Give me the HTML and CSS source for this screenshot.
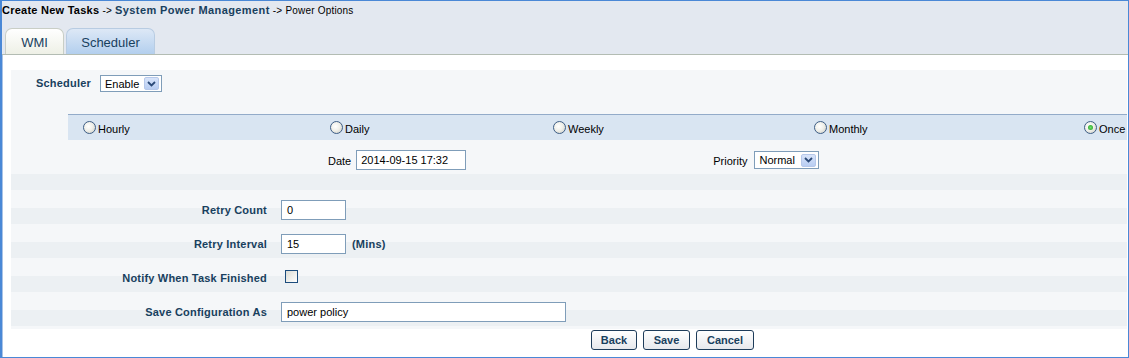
FILE: index.html
```html
<!DOCTYPE html>
<html>
<head>
<meta charset="utf-8">
<link rel="stylesheet" href="styles.css">
</head>
<body>
<div class="frame">
  <div class="header">
    <div class="crumbs"><b class="c1">Create New Tasks</b> <span class="arr">-&gt;</span> <b class="c2">System Power Management</b> <span class="arr">-&gt; Power Options</span></div>
    <div class="tabs">
      <div class="tab tab-wmi">WMI</div>
      <div class="tab tab-sched">Scheduler</div>
    </div>
  </div>
  <div class="content">
    <div class="panel">
      <div class="sched-row">
        <span class="lbl">Scheduler</span>
        <span class="sel sel-enable"><span class="sel-text">Enable</span><span class="sel-btn"><svg width="9" height="6" viewBox="0 0 9 6"><path d="M1 1 L4.5 4.5 L8 1" fill="none" stroke="#2b4a78" stroke-width="1.8"/></svg></span></span>
      </div>
      <div class="band">
        <label class="rad"><span class="circle"></span>Hourly</label>
        <label class="rad"><span class="circle"></span>Daily</label>
        <label class="rad"><span class="circle"></span>Weekly</label>
        <label class="rad"><span class="circle"></span>Monthly</label>
        <label class="rad"><span class="circle on"><span class="dot"></span></span>Once</label>
      </div>
      <div class="date-row">
        <div class="grp grp-date"><span class="plain">Date</span><span class="inp inp-date">2014-09-15 17:32</span></div>
        <div class="grp grp-prio"><span class="plain">Priority</span><span class="sel sel-prio"><span class="sel-text">Normal</span><span class="sel-btn"><svg width="9" height="6" viewBox="0 0 9 6"><path d="M1 1 L4.5 4.5 L8 1" fill="none" stroke="#2b4a78" stroke-width="1.8"/></svg></span></span></div>
      </div>
      <div class="spacer"></div>
      <div class="frow"><span class="flbl">Retry Count</span><span class="inp inp-s">0</span></div>
      <div class="frow"><span class="flbl">Retry Interval</span><span class="inp inp-s">15</span><span class="unit">(Mins)</span></div>
      <div class="frow"><span class="flbl">Notify When Task Finished</span><span class="chk"></span></div>
      <div class="frow"><span class="flbl">Save Configuration As</span><span class="inp inp-l">power policy</span></div>
      <div class="tail"></div>
    </div>
    <div class="buttons">
      <span class="btn btn-back">Back</span>
      <span class="btn btn-save">Save</span>
      <span class="btn btn-cancel">Cancel</span>
    </div>
  </div>
</div>
</body>
</html>
```
FILE: styles.css
```css
* { box-sizing: border-box; }
html, body { margin: 0; padding: 0; background: #fff; }
body { font-family: "Liberation Sans", Arial, sans-serif; font-size: 11px; color: #000; }

.frame {
  width: 1129px; height: 358px;
  border: 1px solid #4a88d6;
  border-left: 2px solid #4a88d6;
  box-shadow: inset 1px 0 0 #a9c3e6;
  overflow: hidden;
  background: #fff;
}

.header {
  height: 54px;
  background: #e3e8f0;
  border-bottom: 1px solid #b3bcb3;
  display: flex; flex-direction: column;
}
.crumbs { height: 27px; padding: 3px 0 0 0; font-size: 11px; white-space: nowrap; }
.crumbs .c1 { color: #000; letter-spacing: 0.25px; }
.crumbs .c2 { color: #18405e; letter-spacing: 0.4px; }
.crumbs .arr { font-size: 10px; letter-spacing: 0.2px; }

.tabs { display: flex; gap: 2px; padding-left: 3px; align-items: flex-end; height: 26px; }
.tab {
  height: 26px; border-radius: 7px 7px 0 0;
  font-size: 13px; color: #18405e;
  display: flex; align-items: center; justify-content: center;
  padding-top: 1px;
}
.tab-wmi {
  width: 59px;
  border: 1px solid #c9cec6; border-bottom: none;
  background: linear-gradient(#ffffff, #eef0e6);
}
.tab-sched {
  width: 89px;
  border: 1px solid #b8cce2; border-bottom: none;
  background: linear-gradient(#dde8f6, #b3cfee);
}

.content { padding: 15px 0 0 9px; }
.panel { background: #f5f7f9; width: 1116px; }

.sched-row { height: 44px; padding: 5px 0 0 25px; display: flex; align-items: flex-start; gap: 9px; }
.lbl { font-weight: bold; color: #18405e; line-height: 17px; letter-spacing: 0.2px; }

.sel {
  display: inline-flex; align-items: center; justify-content: space-between;
  border: 1px solid #7f9db9; background: #fff; height: 17px;
  padding: 0 2px 0 4px; font-size: 11px;
}
.sel-enable { width: 62px; }
.sel-prio { width: 65px; height: 18px; }
.sel-btn {
  width: 15px; height: 13px; border-radius: 2px;
  background: linear-gradient(#d8e4fa, #b8cdf2);
  border: 1px solid #b6c8ea;
  display: flex; align-items: center; justify-content: center;
}

.band {
  margin-left: 57px; height: 26px;
  border-top: 1px solid #93abc9;
  background: #d9e5f2;
  display: grid;
  grid-template-columns: 247px 223px 261px 270px 1fr;
  padding-left: 15px; align-items: center;
}
.rad { display: flex; align-items: center; gap: 2px; font-size: 11px; padding-top: 3px; }
.circle {
  width: 13px; height: 13px; border-radius: 50%;
  border: 1px solid #3e5e86;
  background: radial-gradient(circle at 40% 40%, #ffffff 0%, #f0f0ea 45%, #c8c8c0 100%);
  display: flex; align-items: center; justify-content: center;
  position: relative; top: -2px;
}
.dot { width: 5px; height: 5px; border-radius: 50%; background: radial-gradient(#6ee06a, #1f9a1f); }

.date-row { height: 34px; padding: 10px 0 0 317px; display: flex; align-items: flex-start; }
.grp { display: flex; align-items: center; gap: 5px; height: 20px; }
.grp-prio { margin-left: 247px; gap: 7px; }
.plain { font-size: 11px; padding-top: 1px; }

.inp {
  display: inline-flex; align-items: center;
  border: 1px solid #7f9db9; background: #fff; height: 20px;
  padding: 0 4px; font-size: 11px;
}
.inp-date { width: 110px; }
.inp-s { width: 65px; padding-left: 5px; }
.inp-l { width: 285px; padding-left: 5px; }

.spacer { height: 16px; background: #ecf0f3; }

.frow {
  height: 34px; padding-top: 10px;
  background: linear-gradient(#f5f7f9 0, #f5f7f9 18px, #ecf0f3 18px, #ecf0f3 34px);
  display: flex; align-items: flex-start;
}
.flbl {
  width: 256px; text-align: right; font-weight: bold; color: #18405e;
  line-height: 20px; margin-right: 14px; letter-spacing: 0.2px;
}
.unit { font-weight: bold; color: #18405e; line-height: 20px; margin-left: 6px; letter-spacing: 0.2px; }
.chk {
  width: 13px; height: 13px; margin: 2px 0 0 4px;
  border: 1px solid #1c4c7c;
  background: linear-gradient(135deg, #dcdcd4, #ffffff);
}
.tail { height: 3px; }

.buttons { display: flex; gap: 7px; padding: 1px 0 0 580px; }
.btn {
  height: 20px; display: inline-flex; align-items: center; justify-content: center;
  border: 1px solid #1e3c5a; border-radius: 3px;
  background: linear-gradient(#ffffff, #e6e8ec);
  font-weight: bold; color: #18405e; font-size: 11px;
}
.btn-back { width: 46px; }
.btn-save { width: 47px; margin-left: -1px; }
.btn-cancel { width: 58px; margin-left: -1px; }
```
